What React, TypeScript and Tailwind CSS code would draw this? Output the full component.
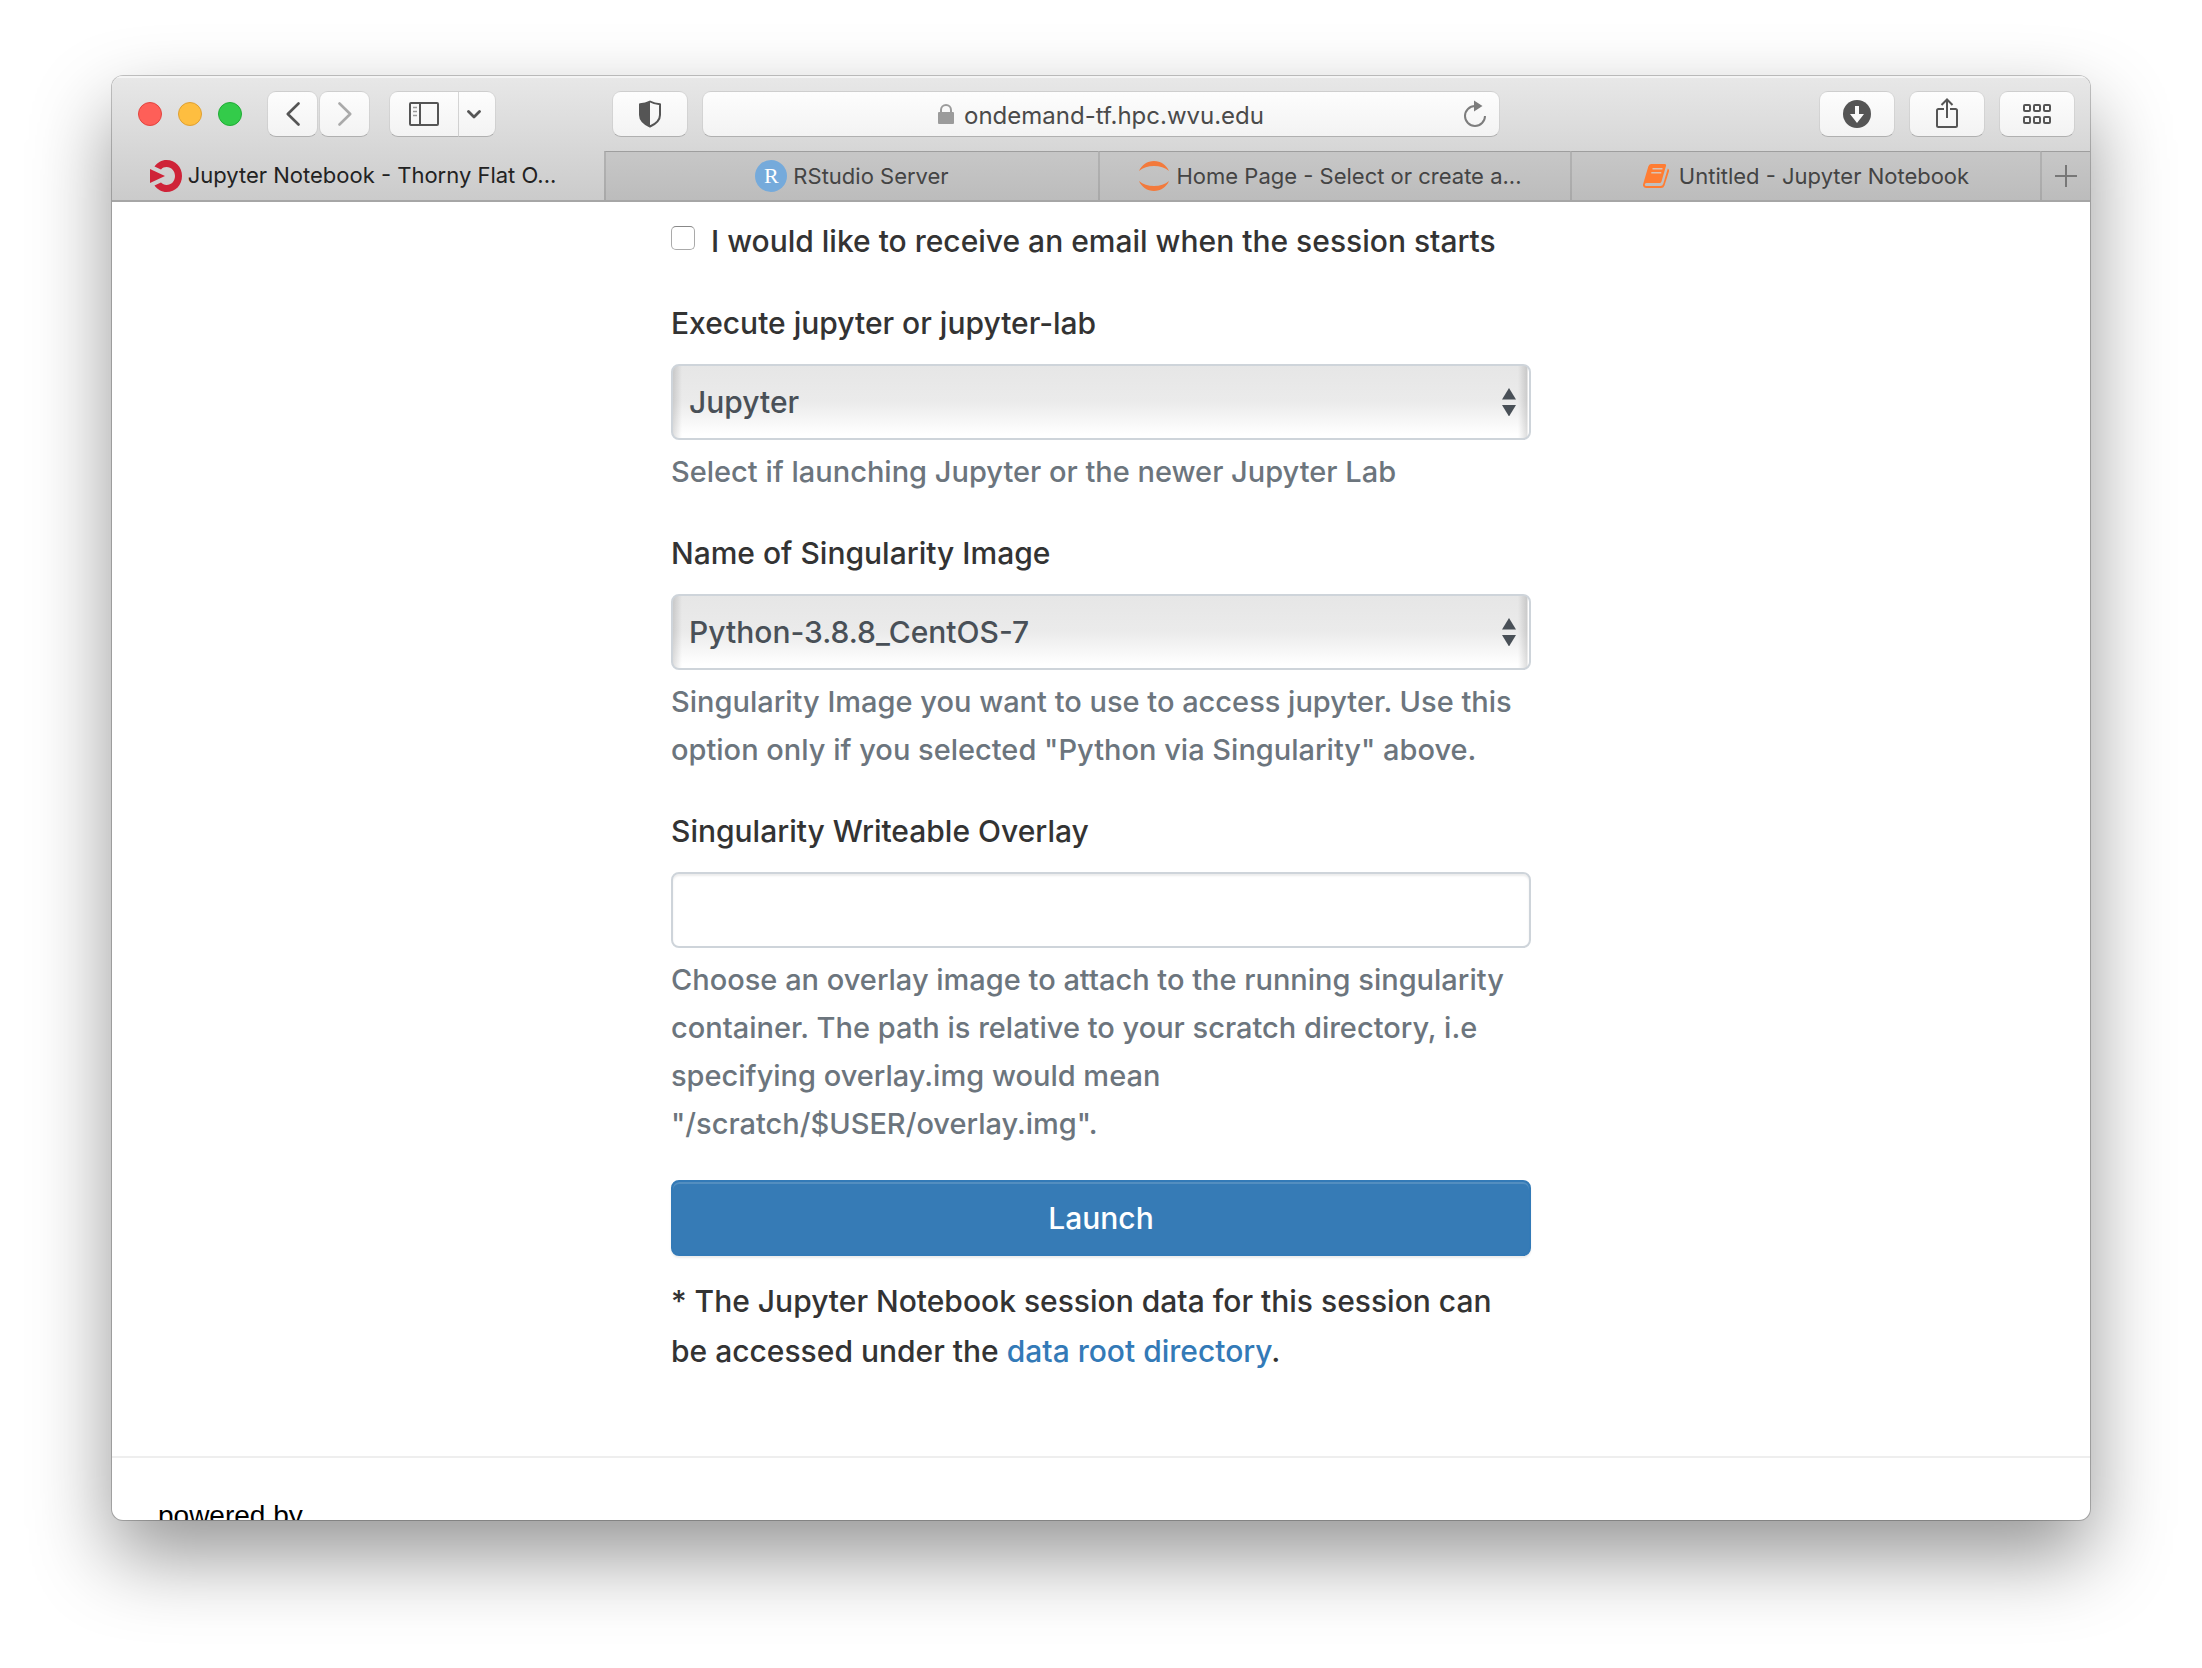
import React, { useState } from "react";

const sans = "font-[Inter,'Liberation_Sans',sans-serif]";

const chromeButton =
  "flex h-[46px] items-center justify-center rounded-[9px] border border-black/15 border-b-black/30 bg-linear-to-b from-[#fdfdfd] to-[#f3f3f3] text-[#555]";

function OnDemandIcon() {
  return (
    <svg viewBox="0 0 32 32" className="size-8 shrink-0" aria-hidden="true">
      <path
        d="M4.5 6.500C7.500 2.400 11.500 0 16.500 0C25.500 0 32 7 32 16S25.500 32 16.500 32C11.500 32 7.500 29.600 4.500 25.500L11 22.600C12.500 24.300 14.300 25 16.500 25C21.500 25 25 21 25 16S21.500 7 16.500 7C14.300 7 12.500 7.700 11 9.400Z"
        fill="#cf2338"
      />
      <path d="M0 9L15 16L0 23Z" fill="#cf2338" />
    </svg>
  );
}

function RStudioIcon() {
  return (
    <span className="flex size-8 shrink-0 items-center justify-center rounded-full bg-[#75aadb] font-['Liberation_Serif',serif] text-[22px] leading-none text-white">
      R
    </span>
  );
}

function JupyterIcon() {
  return (
    <svg viewBox="0 0 30 30" className="size-[30px] shrink-0" aria-hidden="true">
      <path d="M0 10C2.500 4 8.300 0 15 0S27.500 4 30 10C26 6.500 21 5 15 5S4 6.500 0 10Z" fill="#f37a3c" />
      <path d="M0 20C2.500 26 8.300 30 15 30S27.500 26 30 20C26 23.500 21 25 15 25S4 23.500 0 20Z" fill="#f37a3c" />
    </svg>
  );
}

function NotebookIcon() {
  return (
    <svg viewBox="0 0 26 24" className="h-6 w-[26px] shrink-0" aria-hidden="true">
      <path
        d="M8 0H21.500Q23.500 0 23 2L18.500 17.500Q18 19 16.500 19H3.500Q1.800 19 1.800 20.500T3.500 22H17.500Q19.500 22 20.200 20L24.800 4.500Q26.500 5.500 25.900 7.500L21.500 21.500Q20.700 24 18 24H3Q-0.300 24 0 20.500L5.300 2.500Q6 0 8 0Z"
        fill="#ff7d33"
      />
      <path d="M9.500 4.800H19.500M8.300 8.800H18.300" stroke="#d9c3b5" strokeWidth="1.500" />
    </svg>
  );
}

function Tab({ icon, title, active = false, className = "" }: { icon: React.ReactNode; title: string; active?: boolean; className?: string }) {
  return (
    <button
      type="button"
      role="tab"
      aria-selected={active}
      className={`flex min-w-0 items-center justify-center whitespace-nowrap text-[22px] ${
        active ? "text-[#222]" : "border-t border-l-2 border-t-black/20 border-l-black/10 bg-black/7 text-[#444]"
      } ${className}`}
    >
      {icon}
      {title}
    </button>
  );
}

function Toolbar() {
  return (
    <div className="grid h-[75px] grid-cols-[1fr_40.3%_1fr] items-center pt-px">
      <div className="flex items-center pl-[26px] pr-3.5">
        <div className="flex gap-4">
          <button type="button" aria-label="Close" className="size-6 rounded-full border border-[#e2443f] bg-[#fe5f58]" />
          <button type="button" aria-label="Minimize" className="size-6 rounded-full border border-[#dfa032] bg-[#febe40]" />
          <button type="button" aria-label="Zoom" className="size-6 rounded-full border border-[#20ac35] bg-[#33cb4a]" />
        </div>
        <div className="ml-[25px] flex gap-px">
          <button type="button" aria-label="Back" className={`${chromeButton} w-[51px]`}>
            <svg viewBox="0 0 14 24" className="h-6 w-3.5" fill="none" stroke="currentColor" strokeWidth="2.600" strokeLinecap="round" strokeLinejoin="round" aria-hidden="true">
              <path d="M12.500 1.500L1.800 12L12.500 22.500" />
            </svg>
          </button>
          <button type="button" aria-label="Forward" className={`${chromeButton} w-[51px]`}>
            <svg viewBox="0 0 14 24" className="h-6 w-3.5 text-[#aaa]" fill="none" stroke="currentColor" strokeWidth="2.600" strokeLinecap="round" strokeLinejoin="round" aria-hidden="true">
              <path d="M1.500 1.500L12.200 12L1.500 22.500" />
            </svg>
          </button>
        </div>
        <div className="ml-[19px] flex">
          <button type="button" aria-label="Show sidebar" className={`${chromeButton} w-[70px] rounded-r-none`}>
            <svg viewBox="0 0 30 24" className="h-6 w-[30px]" fill="none" stroke="currentColor" strokeWidth="2" aria-hidden="true">
              <rect x="1" y="1" width="28" height="22" rx="1" />
              <path d="M11 1V23" />
              <path d="M4 5.500H8M4 9.500H8M4 13.500H8" stroke="#999" strokeWidth="1.500" />
            </svg>
          </button>
          <button type="button" aria-label="Sidebar options" className={`${chromeButton} w-[37px] rounded-l-none border-l-0 pr-1.5`}>
            <svg viewBox="0 0 14 9" className="h-[9px] w-3.5" fill="none" stroke="currentColor" strokeWidth="2.800" strokeLinecap="round" strokeLinejoin="round" aria-hidden="true">
              <path d="M1.500 1.500L7 7L12.500 1.500" />
            </svg>
          </button>
        </div>
        <button type="button" aria-label="Privacy report" className={`${chromeButton} ml-auto w-[76px]`}>
          <svg viewBox="0 0 24 28" className="h-7 w-6" aria-hidden="true">
            <path d="M12 1.500Q16.500 4 22 4.300V15Q22 22 12 26.500Q2 22 2 15V4.300Q7.500 4 12 1.500Z" fill="none" stroke="currentColor" strokeWidth="2" strokeLinejoin="round" />
            <path d="M12 1.500V26.500Q2 22 2 15V4.300Q7.500 4 12 1.500Z" fill="currentColor" />
          </svg>
        </button>
      </div>
      <div className={`${chromeButton} px-3`}>
        <div className="flex flex-1 items-center justify-center gap-2.5 pl-6">
          <svg viewBox="0 0 16 20" className="h-5 w-4 text-[#9b9b9b]" aria-hidden="true">
            <path d="M3 9V6A5 5 0 0 1 13 6V9" fill="none" stroke="currentColor" strokeWidth="2" />
            <rect y="8" width="16" height="12" rx="1" fill="currentColor" />
          </svg>
          <span className="pt-1 text-[24px] text-[#4a4a4a]">ondemand-tf.hpc.wvu.edu</span>
        </div>
        <button type="button" aria-label="Reload" className="text-[#7d7d7d]">
          <svg viewBox="0 0 24 28" className="h-7 w-6" aria-hidden="true">
            <path d="M12 6A10 10 0 1 0 22 16" fill="none" stroke="currentColor" strokeWidth="2" />
            <path d="M11 0.500L19.500 6L11 11.500Z" fill="currentColor" />
          </svg>
        </button>
      </div>
      <div className="flex justify-end gap-3.5 pr-[15px]">
        <button type="button" aria-label="Downloads" className={`${chromeButton} w-[76px]`}>
          <svg viewBox="0 0 28 28" className="size-7" aria-hidden="true">
            <circle cx="14" cy="14" r="14" fill="currentColor" />
            <path d="M12 6H16V14H21L14 23L7 14H12Z" fill="#fafafa" />
          </svg>
        </button>
        <button type="button" aria-label="Share" className={`${chromeButton} w-[76px]`}>
          <svg viewBox="0 0 22 30" className="mb-0.5 h-[30px] w-[22px]" fill="none" stroke="currentColor" strokeWidth="2" aria-hidden="true">
            <path d="M8 11H2.500Q1 11 1 12.500V27.500Q1 29 2.500 29H19.500Q21 29 21 27.500V12.500Q21 11 19.500 11H14" />
            <path d="M11 20V1.500M5.500 7L11 1.500L16.500 7" />
          </svg>
        </button>
        <button type="button" aria-label="Tab overview" className={`${chromeButton} w-[76px]`}>
          <svg viewBox="0 0 28 20" className="h-5 w-7" fill="none" stroke="currentColor" strokeWidth="2" aria-hidden="true">
            <rect x="1" y="1" width="6" height="6" rx="1" />
            <rect x="11" y="1" width="6" height="6" rx="1" />
            <rect x="21" y="1" width="6" height="6" rx="1" />
            <rect x="1" y="13" width="6" height="6" rx="1" />
            <rect x="11" y="13" width="6" height="6" rx="1" />
            <rect x="21" y="13" width="6" height="6" rx="1" />
          </svg>
        </button>
      </div>
    </div>
  );
}

const fieldBox = "h-[76px] w-full rounded-[8px] border-2 border-[#ced4da] px-4 text-[#495057]";
const helpText = "mt-2 text-[29px] leading-[48px] text-[#6c757d]";

function SelectField({ id, label, options, help }: { id: string; label: string; options: string[]; help: string }) {
  return (
    <div className="mb-8">
      <label htmlFor={id} className="mb-4 block">
        {label}
      </label>
      <div className="relative">
        <select
          id={id}
          aria-describedby={`${id}-help`}
          className={`${fieldBox} block appearance-none bg-[linear-gradient(to_right,rgba(0,0,0,0.13),transparent_9px),linear-gradient(to_left,#fff_1px,rgba(0,0,0,0.13)_2px,transparent_11px),linear-gradient(#e6e6e6,#ebebeb_50%,#fff_95%)]`}
        >
          {options.map((o) => (
            <option key={o}>{o}</option>
          ))}
        </select>
        <svg viewBox="0 0 14 28" className="pointer-events-none absolute right-[15px] top-6 h-7 w-3.5" fill="#495057" aria-hidden="true">
          <path d="M7 0L14 11.500H0Z" />
          <path d="M7 28.500L14 17H0Z" />
        </svg>
      </div>
      <p id={`${id}-help`} className={helpText}>
        {help}
      </p>
    </div>
  );
}

export default function App() {
  const [notify, setNotify] = useState(false);
  const [overlay, setOverlay] = useState("");

  return (
    <div className={`${sans} h-screen overflow-hidden bg-white px-28 pt-[76px] pb-[148px]`}>
      <div className="flex h-full flex-col overflow-hidden rounded-[11px] bg-white shadow-[0_0_0_1px_rgba(0,0,0,0.22),0_36px_80px_rgba(0,0,0,0.42)]">
        <header className="shrink-0 border-b-2 border-[#a6a6a6] bg-linear-to-b from-[#e8e8e8] to-[#cbcbcb] shadow-[inset_0_2px_0_#f4f4f4]">
          <Toolbar />
          <div role="tablist" className="grid h-[49px] grid-cols-[492fr_494fr_472fr_470fr_50fr]">
            <Tab active icon={<OnDemandIcon />} title="Jupyter Notebook - Thorny Flat O..." className="gap-1.5 pr-2.5" />
            <Tab icon={<RStudioIcon />} title="RStudio Server" className="gap-1.5" />
            <Tab icon={<JupyterIcon />} title="Home Page - Select or create a..." className="gap-2 pr-2.5" />
            <Tab icon={<NotebookIcon />} title="Untitled - Jupyter Notebook" className="gap-2.5" />
            <button type="button" aria-label="New tab" className="flex items-center justify-center border-t border-l-2 border-t-black/20 border-l-black/10 bg-black/7">
              <svg viewBox="0 0 22 22" className="size-[22px]" fill="none" stroke="#777" strokeWidth="2" aria-hidden="true">
                <path d="M11 0V22M0 11H22" />
              </svg>
            </button>
          </div>
        </header>

        <main className="min-h-0 flex-1 overflow-hidden">
          <form
            onSubmit={(e) => e.preventDefault()}
            className="mx-auto w-[860px] max-w-full pt-3.5 text-[30px] leading-[50px] font-medium text-[#333]"
          >
            <div className="mb-8 flex">
              <input
                id="notify"
                type="checkbox"
                checked={notify}
                onChange={(e) => setNotify(e.target.checked)}
                className="mt-2.5 size-6 shrink-0 appearance-none rounded-[5px] border border-[#aaa] border-t-[#888] bg-white checked:bg-[#337ab7]"
              />
              <label htmlFor="notify" className="pl-4">
                I would like to receive an email when the session starts
              </label>
            </div>

            <SelectField
              id="flavor"
              label="Execute jupyter or jupyter-lab"
              options={["Jupyter", "Jupyter Lab"]}
              help="Select if launching Jupyter or the newer Jupyter Lab"
            />
            <SelectField
              id="image"
              label="Name of Singularity Image"
              options={["Python-3.8.8_CentOS-7"]}
              help={'Singularity Image you want to use to access jupyter. Use this option only if you selected "Python via Singularity" above.'}
            />

            <div className="mb-8">
              <label htmlFor="overlay" className="mb-4 block">
                Singularity Writeable Overlay
              </label>
              <input
                id="overlay"
                type="text"
                value={overlay}
                onChange={(e) => setOverlay(e.target.value)}
                aria-describedby="overlay-help"
                className={`${fieldBox} block bg-white shadow-[inset_0_2px_2px_rgba(0,0,0,0.075)]`}
              />
              <p id="overlay-help" className={helpText}>
                Choose an overlay image to attach to the running singularity container. The path is relative to your scratch directory, i.e specifying
                overlay.img would mean <span className="whitespace-nowrap">"/scratch/$USER/overlay.img".</span>
              </p>
            </div>

            <button
              type="submit"
              className="block h-[76px] w-full rounded-[8px] border-2 border-[#337ab7] bg-[#367bb6] text-center text-white shadow-[inset_0_2px_0_rgba(255,255,255,0.15),0_2px_2px_rgba(0,0,0,0.075)]"
            >
              Launch
            </button>
            <p className="mt-5">
              * The Jupyter Notebook session data for this session can be accessed under the{" "}
              <a href="#data-root" className="text-[#337ab7]">
                data root directory
              </a>
              .
            </p>
          </form>
          <footer className="mt-20 border-t-2 border-[#eee] px-[46px] pt-9 font-['Liberation_Sans',sans-serif] text-[28px] leading-[44px] text-black">
            powered by
          </footer>
        </main>
      </div>
    </div>
  );
}
